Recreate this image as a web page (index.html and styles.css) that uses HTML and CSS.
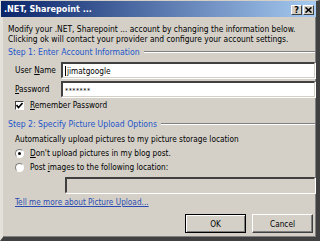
FILE: index.html
```html
<html lang="en">
  <head>
    <meta charset="UTF-8" />
    <title>.NET, Sharepoint ...</title>
    <link rel="stylesheet" href="styles.css">
  </head>

  <body>
    <div class="window">
      <div class="titleBar">
        <span class="titleText">.NET, Sharepoint ...</span>
        <div class="captionButtons">
          <span class="captionButton help">?</span>
          <span class="captionButton">
            <svg width="7" height="6" viewBox="0 0 7 6"><path d="M0.5 0.5 L6.5 5.5 M6.5 0.5 L0.5 5.5" stroke="#000" stroke-width="1.6" /></svg>
          </span>
        </div>
      </div>

      <div class="content">
        <div class="intro">
          Modify your .NET, Sharepoint ... account by changing the information below.<br>
          Clicking ok will contact your provider and configure your account settings.
        </div>

        <div class="groupHeader step1">
          <span>Step 1: Enter Account Information</span>
          <div class="etched"></div>
        </div>

        <div class="field userRow">
          <label class="fieldLabel">User <u>N</u>ame</label>
          <div class="textBox"><span class="caret"></span>jimatgoogle</div>
        </div>
        <div class="field passRow">
          <label class="fieldLabel"><u>P</u>assword</label>
          <div class="textBox"><span class="mask">*******</span></div>
        </div>

        <div class="option checkRow">
          <span class="checkBox">
            <svg width="7" height="7" viewBox="0 0 7 7"><path d="M0.5 3 L2.5 5.5 L6.5 1" fill="none" stroke="#000" stroke-width="1.6" /></svg>
          </span>
          <span><u>R</u>emember Password</span>
        </div>

        <div class="groupHeader step2">
          <span>Step 2: Specify Picture Upload Options</span>
          <div class="etched"></div>
        </div>

        <div class="plainLine autoRow">Automatically upload pictures to my picture storage location</div>

        <div class="option radioRow1">
          <span class="radio checked"></span>
          <span><u>D</u>on't upload pictures in my blog post.</span>
        </div>
        <div class="option radioRow2">
          <span class="radio"></span>
          <span>Post <u>i</u>mages to the following location:</span>
        </div>

        <div class="locationRow">
          <div class="textBox disabled"></div>
        </div>

        <div class="linkRow"><a class="link">Tell me more about Picture Upload...</a></div>

        <div class="buttonRow">
          <div class="pushButton default">OK</div>
          <div class="pushButton">Cancel</div>
        </div>
      </div>
    </div>
  </body>
</html>
```

FILE: styles.css
```css
* {
  box-sizing: border-box;
}

body {
  margin: 0;
  background: #d4d0c8;
  font-family: "DejaVu Sans Condensed", "DejaVu Sans", sans-serif;
  font-size: 8.2px;
  color: #000;
}

.window {
  width: 320px;
  height: 241px;
  background: #d4d0c8;
  border-top: 1px solid #d4d0c8;
  border-left: 3px solid #e4e1da;
  border-right: 4px solid #404040;
  border-bottom: 4px solid #404040;
  box-shadow: inset -1px -1px 0 #808080;
  display: flex;
  flex-direction: column;
}

.titleBar {
  height: 16px;
  margin-left: -2px;
  background: linear-gradient(to right, #0a246a, #a6caf0);
  display: flex;
  align-items: center;
  justify-content: space-between;
  padding: 0 2px 0 3px;
}

.titleText {
  color: #fff;
  font-weight: bold;
  font-size: 9px;
}

.captionButtons {
  display: flex;
  gap: 1px;
  margin-top: 2px;
}

.captionButton {
  width: 11px;
  height: 10px;
  background: #d4d0c8;
  border-top: 1px solid #fff;
  border-left: 1px solid #fff;
  border-right: 1px solid #404040;
  border-bottom: 1px solid #404040;
  display: flex;
  align-items: center;
  justify-content: center;
  font-size: 9px;
  font-weight: bold;
  line-height: 1;
}

.content {
  display: flex;
  flex-direction: column;
  padding-left: 5px;
  padding-right: 1px;
}

.intro {
  margin-top: 7px;
  line-height: 10px;
  font-size: 8.4px;
  white-space: nowrap;
}

.groupHeader {
  height: 12px;
  display: flex;
  align-items: center;
  color: #1d55c9;
  font-size: 8.6px;
}

.etched {
  flex: 1;
  height: 2px;
  margin-left: 4px;
  border-top: 1px solid #808080;
  border-bottom: 1px solid #fff;
}

.step1 {
  margin-top: 2px;
}

.step2 {
  margin-top: 7px;
}

.field {
  height: 16px;
  display: flex;
  align-items: center;
  padding-left: 7px;
}

.userRow {
  margin-top: 4px;
}

.passRow {
  margin-top: 3px;
}

.fieldLabel {
  width: 46px;
}

.textBox {
  flex: 1;
  height: 16px;
  background: #fff;
  border-top: 2px solid #404040;
  border-left: 2px solid #404040;
  border-right: 1px solid #d4d0c8;
  border-bottom: 1px solid #d4d0c8;
  box-shadow: 1px 1px 0 #fff;
  display: flex;
  align-items: center;
  padding-left: 2px;
}

.caret {
  width: 1px;
  height: 10px;
  background: #000;
  margin-right: 1px;
}

.mask {
  font-size: 7px;
  letter-spacing: 0.5px;
  margin-top: 2px;
}

.textBox.disabled {
  background: #d4d0c8;
}

.option {
  height: 12px;
  display: flex;
  align-items: center;
  padding-left: 7px;
  gap: 6px;
}

.checkRow {
  margin-top: 2px;
}

.checkBox {
  width: 9px;
  height: 9px;
  background: #fff;
  border-top: 1px solid #404040;
  border-left: 1px solid #404040;
  border-right: 1px solid #fff;
  border-bottom: 1px solid #fff;
  display: flex;
  align-items: center;
  justify-content: center;
}

.plainLine {
  height: 12px;
  line-height: 12px;
  padding-left: 7px;
}

.autoRow {
  margin-top: 3px;
}

.radioRow1 {
  margin-top: 2px;
}

.radioRow2 {
  margin-top: 2px;
}

.radio {
  width: 9px;
  height: 9px;
  border-radius: 50%;
  background: #fff;
  border: 1px solid;
  border-color: #808080 #fff #fff #808080;
  display: flex;
  align-items: center;
  justify-content: center;
}

.radio.checked::after {
  content: "";
  width: 3px;
  height: 3px;
  border-radius: 50%;
  background: #000;
}

.locationRow {
  height: 16px;
  margin-top: 4px;
  padding-left: 57px;
  display: flex;
}

.linkRow {
  height: 12px;
  line-height: 12px;
  margin-top: 3px;
  padding-left: 7px;
}

.link {
  color: #2a4cb0;
  text-decoration: underline;
}

.buttonRow {
  margin-top: 6px;
  display: flex;
  justify-content: flex-end;
  gap: 6px;
  padding-right: 2px;
}

.pushButton {
  width: 61px;
  height: 19px;
  background: #d4d0c8;
  border-top: 1px solid #fff;
  border-left: 1px solid #fff;
  border-right: 1px solid #404040;
  border-bottom: 1px solid #404040;
  box-shadow: inset -1px -1px 0 #808080;
  display: flex;
  align-items: center;
  justify-content: center;
}

.pushButton.default {
  outline: 1px solid #000;
  outline-offset: -1px;
  border-color: #000;
  box-shadow: inset 1px 1px 0 #fff, inset -1px -1px 0 #808080;
}
```
